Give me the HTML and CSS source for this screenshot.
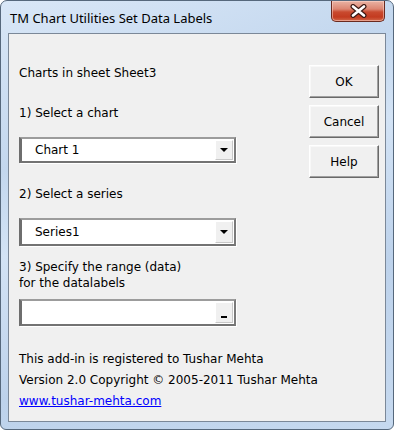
FILE: index.html
```html
<!DOCTYPE html>
<html lang="en">
<head>
    <meta charset="UTF-8">
    <title>TM Chart Utilities Set Data Labels</title>
    <link rel="stylesheet" href="styles.css">
</head>
<body>
    <div class="window">
        <!-- Title bar -->
        <div class="titlebar">
            <span class="title">TM Chart Utilities Set Data Labels</span>
            <div class="close">
                <svg width="17" height="14" viewBox="0 0 17 14">
                    <path d="M3 2.5 L14 11.5 M14 2.5 L3 11.5" stroke="#3d1a14" stroke-width="5" stroke-linecap="round"/>
                    <path d="M3 2.5 L14 11.5 M14 2.5 L3 11.5" stroke="#ffffff" stroke-width="2.6" stroke-linecap="round"/>
                </svg>
            </div>
        </div>

        <!-- Dialog client area -->
        <div class="client">
            <div class="form-col">
                <p class="sheet-label">Charts in sheet Sheet3</p>

                <p class="step-label">1) Select a chart</p>
                <div class="combo">
                    <span class="combo-text">Chart 1</span>
                    <span class="drop-btn"><span class="arrow"></span></span>
                </div>

                <p class="step-label">2) Select a series</p>
                <div class="combo combo-tall">
                    <span class="combo-text">Series1</span>
                    <span class="drop-btn"><span class="arrow"></span></span>
                </div>

                <p class="step-label range-label">3) Specify the range (data)<br>for the datalabels</p>
                <div class="combo range-box">
                    <span class="combo-text"></span>
                    <span class="drop-btn"><span class="dash"></span></span>
                </div>

                <div class="info">
                    <p>This add-in is registered to Tushar Mehta</p>
                    <p>Version 2.0 Copyright &copy; 2005-2011 Tushar Mehta</p>
                    <p><a href="#">www.tushar-mehta.com</a></p>
                </div>
            </div>

            <div class="btn-col">
                <button>OK</button>
                <button>Cancel</button>
                <button>Help</button>
            </div>
        </div>
    </div>
</body>
</html>
```

FILE: styles.css
```css
body {
    margin: 0;
    padding: 0;
    width: 394px;
    height: 430px;
    background: #ffffff;
    overflow: hidden;
}
.window {
    width: 394px;
    height: 430px;
    box-sizing: border-box;
    border: 1px solid #56687c;
    border-radius: 7px 7px 6px 6px;
    background: linear-gradient(160deg, #d9e7f7 0%, #c3d7ee 30%, #d3e3f5 45%, #bdd2eb 70%, #c6d9ef 100%);
    display: flex;
    flex-direction: column;
    overflow: hidden;
}
.titlebar {
    height: 32px;
    display: flex;
    align-items: flex-start;
    flex-shrink: 0;
}
.title {
    font-family: "Noto Sans", "Open Sans", sans-serif;
    font-size: 13px;
    color: #000000;
    padding: 8px 0 0 9px;
    line-height: 18px;
}
.close {
    margin-left: auto;
    margin-right: 8px;
    width: 54px;
    height: 21px;
    box-sizing: border-box;
    border: 1px solid #6a2a1f;
    border-top: none;
    border-radius: 0 0 5px 5px;
    background: linear-gradient(to bottom, #e9b3a4 0%, #dc8672 40%, #c94a2f 55%, #c33b20 80%, #d2684a 100%);
    box-shadow: inset 0 0 0 1px rgba(255, 220, 210, 0.5);
    display: flex;
    align-items: center;
    justify-content: center;
}
.client {
    flex: 1;
    margin: 0 7px 7px 7px;
    border: 1px solid #7b8898;
    background: #f0f0f0;
    display: flex;
    padding: 31px 0 0 10px;
    font-family: "DejaVu Sans", Verdana, sans-serif;
    font-size: 12px;
    color: #000000;
}
.form-col {
    width: 217px;
    flex-shrink: 0;
}
p {
    margin: 0;
    line-height: 16px;
}
.sheet-label {
    margin-bottom: 24px;
}
.step-label {
    margin-bottom: 16px;
}
.range-label {
    margin-bottom: 8px;
}
.combo {
    height: 26px;
    box-sizing: border-box;
    background: #ffffff;
    border-style: solid;
    border-width: 2px 2px 2px 3px;
    border-color: #9c9c9c #7a7a7a #737373 #6e6e6e;
    box-shadow: 1px 1px 0 #ffffff;
    display: flex;
    align-items: center;
    margin-bottom: 23px;
}
.combo-tall {
    height: 28px;
    margin-bottom: 13px;
}
.range-box {
    height: 27px;
    margin-bottom: 23px;
}
.combo-text {
    flex: 1;
    margin-left: 13px;
    line-height: 16px;
}
.drop-btn {
    width: 18px;
    align-self: stretch;
    margin: 1px 1px 1px 0;
    box-sizing: border-box;
    background: #f0f0f0;
    border-top: 1px solid #ffffff;
    border-left: 1px solid #ffffff;
    border-right: 1px solid #c8c8c8;
    border-bottom: 1px solid #c8c8c8;
    display: flex;
    align-items: center;
    justify-content: center;
}
.arrow {
    width: 0;
    height: 0;
    border-left: 4px solid transparent;
    border-right: 4px solid transparent;
    border-top: 4px solid #000000;
}
.dash {
    width: 6px;
    height: 2px;
    background: #000000;
    margin-top: 8px;
}
.info {
    white-space: nowrap;
}
.info p {
    line-height: 21px;
}
.info a {
    color: #0000ff;
    text-decoration: underline;
}
.btn-col {
    margin-left: 73px;
    display: flex;
    flex-direction: column;
    gap: 7px;
}
button {
    width: 70px;
    height: 33px;
    font-family: "DejaVu Sans", Verdana, sans-serif;
    font-size: 12px;
    color: #000000;
    background: #f0f0f0;
    border: 1px solid;
    border-color: #ffffff #696969 #696969 #ffffff;
    box-shadow: inset -1px -1px 0 #a0a0a0, inset 1px 1px 0 #f8f8f8;
    padding: 0;
    cursor: pointer;
}
```
